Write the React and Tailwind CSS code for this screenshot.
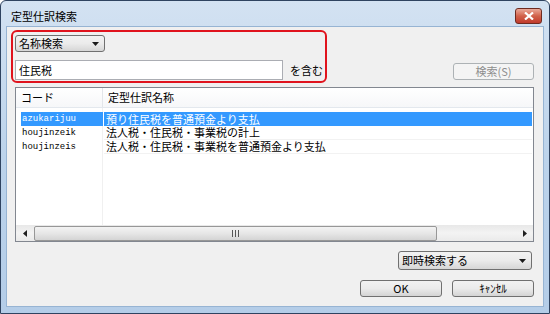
const rows = [
  { code: "azukarijuu", name: "預り住民税を普通預金より支払", selected: true },
  { code: "houjinzeik", name: "法人税・住民税・事業税の計上" },
  { code: "houjinzeis", name: "法人税・住民税・事業税を普通預金より支払" },
]

function DownArrow() {
  return (
    <svg width="7" height="4" viewBox="0 0 7 4">
      <path d="M0 0h7L3.5 4z" fill="#1a1a1a" />
    </svg>
  )
}

function WinButton({ children, className = "", disabled }) {
  return (
    <div
      className={
        "flex items-center justify-center rounded-[3px] border bg-gradient-to-b " +
        (disabled
          ? "border-[#adb2b5] from-[#f4f4f4] to-[#f4f4f4] text-[#8d8d8d] "
          : "border-[#707070] from-[#f2f2f2] via-[#ebebeb] to-[#d4d4d4] text-black ") +
        className
      }
    >
      {children}
    </div>
  )
}

function Combo({ label, className = "" }) {
  return (
    <div
      className={
        "flex items-center rounded-[3px] border border-[#707070] bg-gradient-to-b from-[#f2f2f2] via-[#ebebeb] to-[#d6d6d6] pl-[3px] pr-[5px] " +
        className
      }
    >
      <span className="flex-1 leading-none">{label}</span>
      <DownArrow />
    </div>
  )
}

export default function App() {
  return (
    <div className="w-[550px] h-[314px] flex flex-col rounded-t-[6px] border border-[#2f4360] bg-gradient-to-b from-[#d3e2f2] via-[#bcd3eb] to-[#b4cde8] text-[11px] text-black font-['Noto_Sans_CJK_JP',sans-serif]">
      {/* title bar */}
      <div className="h-[25px] flex items-start pt-[7px] pl-[10px] pr-[7px]">
        <span className="leading-[16px]">定型仕訳検索</span>
        <div className="ml-auto w-[27px] h-[16px] rounded-[3px] border border-[#6e2b20] bg-gradient-to-b from-[#e9a99a] via-[#d1614a] to-[#c0392b] flex items-center justify-center">
          <svg width="10" height="8" viewBox="0 0 10 8">
            <path d="M1 0.5l8 7M9 0.5l-8 7" stroke="#fff" strokeWidth="2.2" />
          </svg>
        </div>
      </div>

      {/* client area */}
      <div className="flex-1 mx-[5px] mb-[6px] border border-[#97b4d3] bg-[#f0f0f0] flex flex-col">
        <div className="flex items-start">
          <div className="ml-[4px] mt-[3px] w-[316px] h-[53px] rounded-[6px] border-2 border-[#e0131d] pl-[2px] pt-[3px] flex flex-col">
            <Combo label="名称検索" className="w-[90px] h-[17px]" />
            <div className="flex items-center mt-[8px]">
              <div className="shrink-0 w-[268px] h-[20px] border border-[#abadb3] bg-white flex items-center pl-[3px] leading-none">
                住民税
              </div>
              <span className="ml-[7px] leading-none whitespace-nowrap">を含む</span>
            </div>
          </div>
          <WinButton disabled className="ml-auto mr-[9px] mt-[36px] w-[81px] h-[17px] leading-none">
            検索(S)
          </WinButton>
        </div>

        {/* list */}
        <div className="ml-[8px] mr-[9px] mt-[4px] h-[155px] border border-[#828790] bg-white flex flex-col">
          <div className="h-[20px] flex items-center border-b border-[#e3e8ee] bg-gradient-to-b from-white to-[#f6f7f9]">
            <div className="w-[87px] pl-[5px] h-full flex items-center border-r border-[#e3e6ea] leading-none">
              コード
            </div>
            <div className="pl-[5px] leading-none">定型仕訳名称</div>
          </div>
          <div className="flex-1 relative pt-[4px]">
            <div className="absolute left-[86px] top-0 bottom-0 w-px bg-[#f0f0f0]" />
            {rows.map((r) => (
              <div key={r.code} className="relative h-[14px] flex pl-[5px] pr-[1px]">
                <div
                  className={
                    "w-[82px] h-full flex items-center pl-[1px] font-['Liberation_Mono',monospace] text-[9px] leading-none " +
                    (r.selected ? "bg-[#3399ff] text-white" : "")
                  }
                >
                  {r.code}
                </div>
                <div
                  className={
                    "flex-1 ml-px h-full flex items-center pl-[2px] leading-none " +
                    (r.selected ? "bg-[#3399ff] text-white" : "border-b border-[#f2f2f2]")
                  }
                >
                  {r.name}
                </div>
              </div>
            ))}
          </div>
          {/* horizontal scrollbar */}
          <div className="h-[16px] flex items-center bg-gradient-to-b from-[#e8e8e8] via-[#f3f3f3] to-[#eaeaea]">
            <div className="w-[17px] h-full flex items-center justify-center">
              <svg width="4" height="7" viewBox="0 0 4 7">
                <path d="M4 0v7L0 3.5z" fill="#202020" />
              </svg>
            </div>
            <div className="ml-[1px] w-[403px] h-[15px] rounded-[2px] border border-[#979797] bg-gradient-to-b from-[#f3f3f3] via-[#e6e6e6] to-[#d4d4d4] flex items-center justify-center">
              <svg width="7" height="7" viewBox="0 0 7 7">
                <path d="M0.5 0v7M3.5 0v7M6.5 0v7" stroke="#555" strokeWidth="1" />
              </svg>
            </div>
            <div className="flex-1" />
            <div className="w-[17px] h-full flex items-center justify-center">
              <svg width="4" height="7" viewBox="0 0 4 7">
                <path d="M0 0v7L4 3.5z" fill="#202020" />
              </svg>
            </div>
          </div>
        </div>

        <div className="flex justify-end mt-[9px] mr-[11px]">
          <Combo label="即時検索する" className="w-[134px] h-[19px]" />
        </div>

        <div className="flex justify-end gap-[10px] mt-[10px] mr-[9px]">
          <WinButton className="w-[82px] h-[17px] leading-none">OK</WinButton>
          <WinButton className="w-[82px] h-[17px] leading-none">ｷｬﾝｾﾙ</WinButton>
        </div>
      </div>
    </div>
  )
}
